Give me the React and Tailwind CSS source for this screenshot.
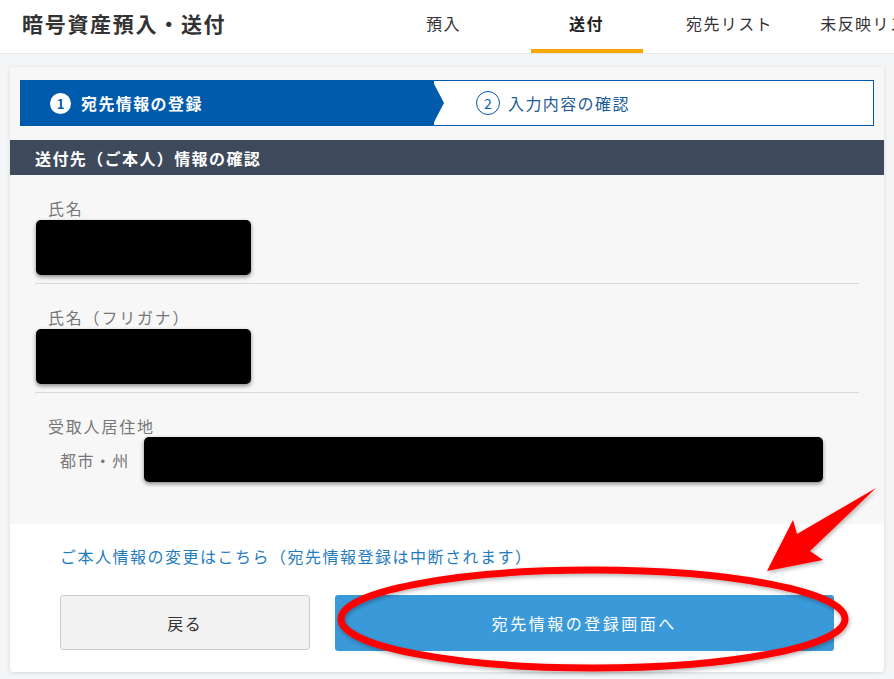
const jp = { fontFamily: '"Noto Sans CJK JP", "Noto Sans", sans-serif' };

function Redacted({ className }) {
  return <div className={`bg-black rounded-[5px] shadow-[0_2px_4px_rgba(0,0,0,0.45)] ${className}`} />;
}

function Field({ label, children, last }) {
  return (
    <div className={`pt-[22px] ${last ? "" : "border-b border-[#d9d9d9] pb-[8px]"}`}>
      <div className="pl-[13px] text-[16px] leading-[22px] text-[#777] tracking-[1.8px]">{label}</div>
      {children}
    </div>
  );
}

export default function App() {
  const tabs = ["預入", "送付", "宛先リスト", "未反映リスト"];
  return (
    <div className="relative w-[894px] h-[679px] overflow-hidden bg-[#f4f5f7] tracking-[1.4px]" style={jp}>
      <header className="h-[54px] bg-white border-b border-[#e6e7ea] flex items-start">
        <h1 className="pl-[22px] pt-[9px] text-[21px] leading-[28px] font-bold text-[#333] w-[372px] shrink-0 tracking-[1.7px]">
          暗号資産預入・送付
        </h1>
        <nav className="flex shrink-0">
          {tabs.map((t) => (
            <div key={t} className="w-[143px] shrink-0 flex flex-col items-center">
              <span
                className={`pt-[12px] text-[16px] leading-[22px] whitespace-nowrap ${
                  t === "送付" ? "font-bold text-[#222]" : "text-[#333]"
                }`}
              >
                {t}
              </span>
              <div className={`mt-[15px] h-[4px] w-[112px] ${t === "送付" ? "bg-[#f5a800]" : ""}`} />
            </div>
          ))}
        </nav>
      </header>

      <div className="px-[10px] pt-[13px]">
        <div className="bg-white rounded-[4px] shadow-[0_1px_4px_rgba(0,0,0,0.12)] overflow-hidden h-[605px] flex flex-col">
          <div className="bg-[#f7f7f7] pt-[13px] px-[10px] pb-[14px]">
            <div className="flex h-[46px]">
              <div className="relative w-[413px] bg-[#005bac] flex items-center pl-[30px] gap-[10px] shrink-0">
                <span className="w-[21px] h-[21px] rounded-full bg-white text-[#005bac] text-[13px] font-bold flex items-center justify-center leading-none tracking-normal">
                  1
                </span>
                <span className="text-white text-[16px] font-bold">宛先情報の登録</span>
                <svg className="absolute right-[-12px] top-0" width="13" height="46" viewBox="0 0 13 46">
                  <polygon points="0,0 12,23 0,46" fill="#005bac" />
                </svg>
              </div>
              <div className="flex-1 border border-[#005bac] bg-white flex items-center pl-[42px] gap-[8px]">
                <span className="w-[24px] h-[24px] rounded-full border-[1.5px] border-[#005bac] text-[#005bac] text-[14px] flex items-center justify-center leading-none tracking-normal">
                  2
                </span>
                <span className="text-[#1d5a99] text-[16px]">入力内容の確認</span>
              </div>
            </div>
          </div>

          <div className="bg-[#3e4a5b] h-[35px] flex items-center pl-[25px]">
            <span className="text-white text-[16px] font-bold">送付先（ご本人）情報の確認</span>
          </div>

          <div className="bg-[#f7f7f7] px-[25px] pb-[42px]">
            <Field label="氏名">
              <Redacted className="mt-[1px] ml-[1px] w-[215px] h-[55px]" />
            </Field>
            <Field label="氏名（フリガナ）">
              <Redacted className="mt-[1px] ml-[1px] w-[215px] h-[55px]" />
            </Field>
            <Field label="受取人居住地" last>
              <div className="flex items-center mt-[0px]">
                <span className="pl-[25px] w-[109px] text-[16px] text-[#777] whitespace-nowrap">都市・州</span>
                <Redacted className="w-[679px] h-[45px]" />
              </div>
            </Field>
          </div>

          <div className="flex-1 bg-white px-[50px] pt-[21px]">
            <a className="block text-[16px] leading-[22px] text-[#1f7cc0] tracking-[1.5px]">
              ご本人情報の変更はこちら（宛先情報登録は中断されます）
            </a>
            <div className="flex gap-[25px] mt-[28px]">
              <button className="w-[250px] h-[55px] bg-[#f2f2f2] border border-[#cccccc] rounded-[3px] text-[16px] text-[#333] tracking-[1.6px]">
                戻る
              </button>
              <button className="w-[500px] h-[56px] bg-[#3a9ad9] rounded-[3px] text-[16px] text-white tracking-[2.5px]">
                宛先情報の登録画面へ
              </button>
            </div>
          </div>
        </div>
      </div>

      <svg className="absolute left-0 top-0 pointer-events-none" width="894" height="679" viewBox="0 0 894 679">
        <defs>
          <filter id="sh" x="-10%" y="-30%" width="120%" height="160%">
            <feDropShadow dx="1" dy="2" stdDeviation="2" floodColor="#000" floodOpacity="0.3" />
          </filter>
        </defs>
        <ellipse cx="593" cy="619" rx="252" ry="49" fill="none" stroke="#ff0000" strokeWidth="7" filter="url(#sh)" />
        <polygon
          points="767,571 793,520 797,534 876,488 810,551 823,560"
          fill="#ff0000"
          filter="url(#sh)"
        />
      </svg>
    </div>
  );
}
